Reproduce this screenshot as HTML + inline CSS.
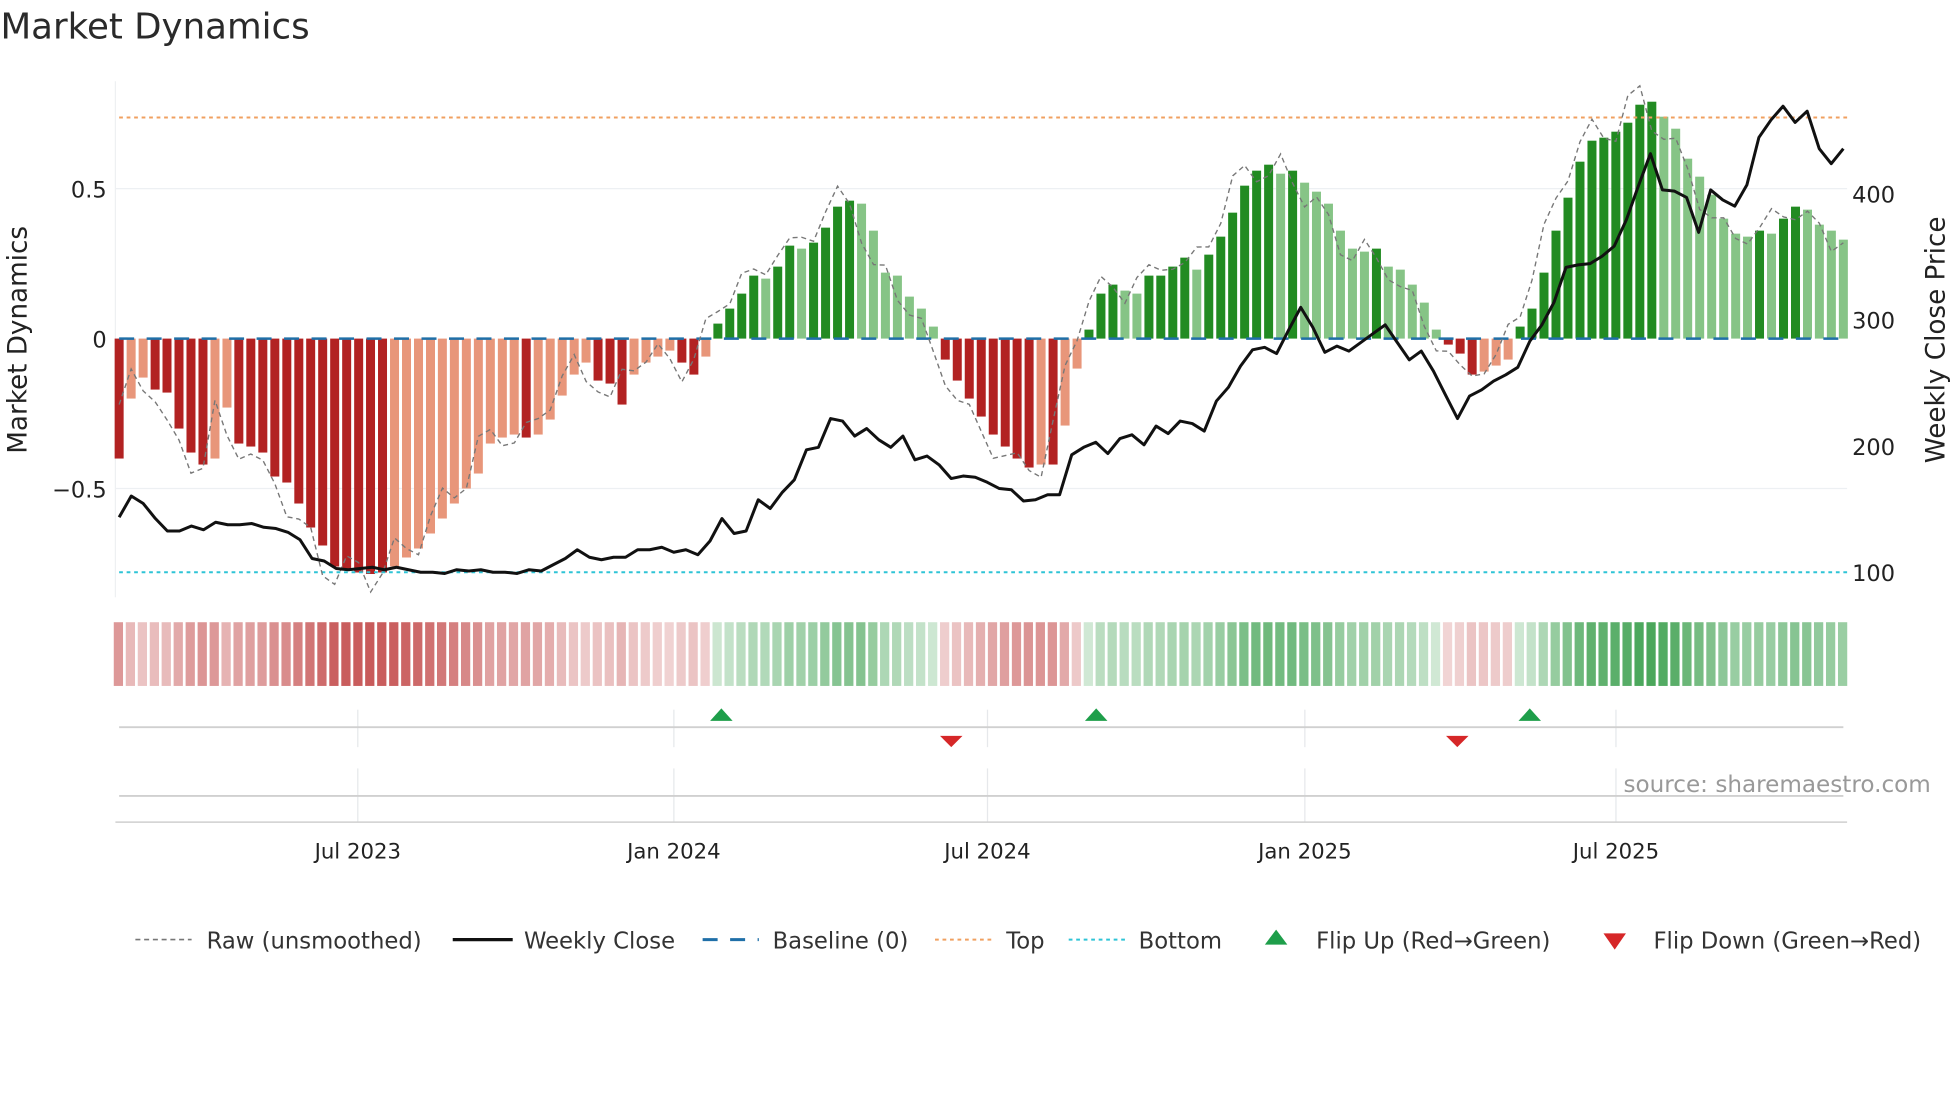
<!DOCTYPE html>
<html><head><meta charset="utf-8"><style>
html,body{margin:0;padding:0;background:#fff;}
svg{display:block;font-family:"DejaVu Sans","Liberation Sans",sans-serif;}
</style></head><body>
<svg id="s" width="1960" height="1102" viewBox="0 0 1568 882" xmlns="http://www.w3.org/2000/svg">
<rect width="1568" height="882" fill="#fff"/>
<text x="0" y="31" font-size="28.5" fill="#2a2a2a">Market Dynamics</text>
<line x1="92" y1="151" x2="1478" y2="151" stroke="#edf0f3" stroke-width="1"/>
<line x1="92" y1="391" x2="1478" y2="391" stroke="#edf0f3" stroke-width="1"/>
<line x1="92" y1="65" x2="92" y2="478" stroke="#eef0f2" stroke-width="1"/>
<g id="bars"></g>
<g id="heat"></g>
<line x1="95" y1="94" x2="1478" y2="94" stroke="#f0a060" stroke-width="1.6" stroke-dasharray="3,3"/>
<line x1="95" y1="458" x2="1478" y2="458" stroke="#2ec4d6" stroke-width="1.6" stroke-dasharray="3,3"/>
<line x1="95" y1="271" x2="1478" y2="271" stroke="#1f6fa8" stroke-width="2" stroke-dasharray="12,10"/>
<path id="raw" fill="none" stroke="#777" stroke-width="1.1" stroke-dasharray="4,3"/>
<path id="close" fill="none" stroke="#111" stroke-width="2.4" stroke-linejoin="round"/>
<g font-size="18" fill="#222">
<text x="85" y="158" text-anchor="end">0.5</text>
<text x="85" y="278" text-anchor="end">0</text>
<text x="85" y="398" text-anchor="end">−0.5</text>
<text x="1482" y="162">400</text>
<text x="1482" y="263">300</text>
<text x="1482" y="364">200</text>
<text x="1482" y="465">100</text>
<text transform="translate(21,272) rotate(-90)" text-anchor="middle" font-size="21">Market Dynamics</text>
<text transform="translate(1556,272) rotate(-90)" text-anchor="middle" font-size="21">Weekly Close Price</text>
</g>
<g stroke="#e6e8eb" stroke-width="1">
<line x1="286" y1="568" x2="286" y2="598"/><line x1="539" y1="568" x2="539" y2="598"/><line x1="790" y1="568" x2="790" y2="598"/><line x1="1044" y1="568" x2="1044" y2="598"/><line x1="1293" y1="568" x2="1293" y2="598"/>
<line x1="286" y1="615" x2="286" y2="658"/><line x1="539" y1="615" x2="539" y2="658"/><line x1="790" y1="615" x2="790" y2="658"/><line x1="1044" y1="615" x2="1044" y2="658"/><line x1="1293" y1="615" x2="1293" y2="658"/>
</g>
<line x1="95" y1="582" x2="1475" y2="582" stroke="#d0d0d0" stroke-width="1.5"/>
<line x1="95" y1="637" x2="1475" y2="637" stroke="#d0d0d0" stroke-width="1.5"/>
<line x1="92" y1="658" x2="1478" y2="658" stroke="#cfcfcf" stroke-width="1.2"/>
<g fill="#1e9e4a"><path d="M577 567 L586 577 L568 577Z"/><path d="M877 567 L886 577 L868 577Z"/><path d="M1224 567 L1233 577 L1215 577Z"/></g>
<g fill="#d62728"><path d="M752 589 L770 589 L761 598Z"/><path d="M1157 589 L1175 589 L1166 598Z"/></g>
<text x="1545" y="634" text-anchor="end" font-size="18.5" fill="#999">source: sharemaestro.com</text>
<g font-size="17" fill="#222" text-anchor="middle">
<text x="286" y="687">Jul 2023</text><text x="539" y="687">Jan 2024</text><text x="790" y="687">Jul 2024</text><text x="1044" y="687">Jan 2025</text><text x="1293" y="687">Jul 2025</text>
</g>
<g font-size="18.2" fill="#333">
<line x1="108" y1="752" x2="153" y2="752" stroke="#777" stroke-width="1.3" stroke-dasharray="4,3"/>
<text x="165" y="759">Raw (unsmoothed)</text>
<line x1="362" y1="752" x2="410" y2="752" stroke="#111" stroke-width="2.6"/>
<text x="419" y="759">Weekly Close</text>
<line x1="562" y1="752" x2="607" y2="752" stroke="#1f6fa8" stroke-width="2.4" stroke-dasharray="12,10"/>
<text x="618" y="759">Baseline (0)</text>
<line x1="748" y1="752" x2="793" y2="752" stroke="#f0a060" stroke-width="1.6" stroke-dasharray="3,3"/>
<text x="805" y="759">Top</text>
<line x1="855" y1="752" x2="900" y2="752" stroke="#2ec4d6" stroke-width="1.6" stroke-dasharray="3,3"/>
<text x="911" y="759">Bottom</text>
<path d="M1021 744 L1030 756 L1012 756Z" fill="#1e9e4a"/>
<text x="1053" y="759">Flip Up (Red→Green)</text>
<path d="M1283 747 L1301 747 L1292 760Z" fill="#d62728"/>
<text x="1323" y="759">Flip Down (Green→Red)</text>
</g>
</svg>
<script>
var V=[-0.4,-0.2,-0.13,-0.17,-0.18,-0.3,-0.38,-0.42,-0.4,-0.23,-0.35,-0.36,-0.38,-0.46,-0.48,-0.55,-0.63,-0.69,-0.76,-0.77,-0.78,-0.785,
-0.78,-0.76,-0.73,-0.7,-0.65,-0.6,-0.55,-0.5,-0.45,-0.35,-0.33,-0.32,-0.33,-0.32,-0.27,-0.19,-0.12,-0.08,-0.14,-0.15,-0.22,-0.12,-0.08,-0.06,-0.04,-0.08,-0.12,-0.06,
0.05,0.1,0.15,0.21,0.2,0.24,0.31,0.3,0.32,0.37,0.44,0.46,0.45,0.36,0.22,0.21,0.14,0.1,0.04,
-0.07,-0.14,-0.2,-0.26,-0.32,-0.36,-0.4,-0.43,-0.42,-0.42,-0.29,-0.1,
0.03,0.15,0.18,0.16,0.15,0.21,0.21,0.24,0.27,0.23,0.28,0.34,0.42,0.51,0.56,0.58,0.55,0.56,0.52,0.49,0.45,0.36,0.3,0.29,0.3,0.24,0.23,0.18,0.12,0.03,
-0.02,-0.05,-0.12,-0.11,-0.09,-0.07,
0.04,0.1,0.22,0.36,0.47,0.59,0.66,0.67,0.69,0.72,0.78,0.79,0.74,0.7,0.6,0.54,0.48,0.4,0.35,0.34,0.36,0.35,0.4,0.44,0.43,0.38,0.36,0.33];
var n=V.length,step=(1475-95)/(n-1),b='',h='',raw='';
for(var i=0;i<n;i++){var x=95+i*step,v=V[i],p=i?V[i-1]:0;
var inc=(v*p<=0)||Math.abs(v)>=Math.abs(p)-0.005;
var c=v<0?(inc?'#b22222':'#e8967a'):(inc?'#228b22':'#86c486');
var y=271-v*240;
b+='<rect x="'+(x-3.6).toFixed(1)+'" y="'+Math.min(y,271).toFixed(1)+'" width="7.2" height="'+Math.abs(y-271).toFixed(1)+'" fill="'+c+'"/>';
var a=(0.2+0.65*Math.min(1,Math.abs(v)/0.8)).toFixed(2);
var hc=v<0?'rgba(190,60,60,'+a+')':'rgba(40,150,60,'+a+')';
h+='<rect x="'+(x-4.3).toFixed(1)+'" y="498" width="7.4" height="51" fill="'+hc+'"/>';
var q=V[Math.min(n-1,i+1)],rv=v+(q-v)*0.9+0.06*Math.sin(i*1.7)*(0.4+Math.abs(v));
raw+=(i?'L':'M')+x.toFixed(1)+' '+(271-rv*240).toFixed(1);}
document.getElementById('bars').innerHTML=b;
document.getElementById('heat').innerHTML=h;
document.getElementById('raw').setAttribute('d',raw);
var P=[414,397,403,415,425,425,421,424,418,420,420,419,422,423,426,432,447,449,455,456,455,454,456,454,456,458,458,459,456,457,456,458,458,459,456,457,452,447,440,446,448,446,446,440,440,438,442,440,444,433,415,427,425,400,407,394,384,360,358,335,337,349,343,352,358,349,368,365,372,383,381,382,386,391,392,401,400,396,396,364,358,354,363,351,348,356,341,347,337,339,345,321,310,293,280,278,283,264,246,262,282,277,281,274,267,260,274,288,281,297,316,335,317,312,305,300,294,273,260,242,214,212,211,205,197,176,149,123,152,153,158,186,152,160,165,148,110,96,85,98,89,119,131,119];
var m=P.length,st=(1475-95)/(m-1),d='';
for(var j=0;j<m;j++)d+=(j?'L':'M')+(95+j*st).toFixed(1)+' '+P[j];
document.getElementById('close').setAttribute('d',d);
</script>
</body></html>
